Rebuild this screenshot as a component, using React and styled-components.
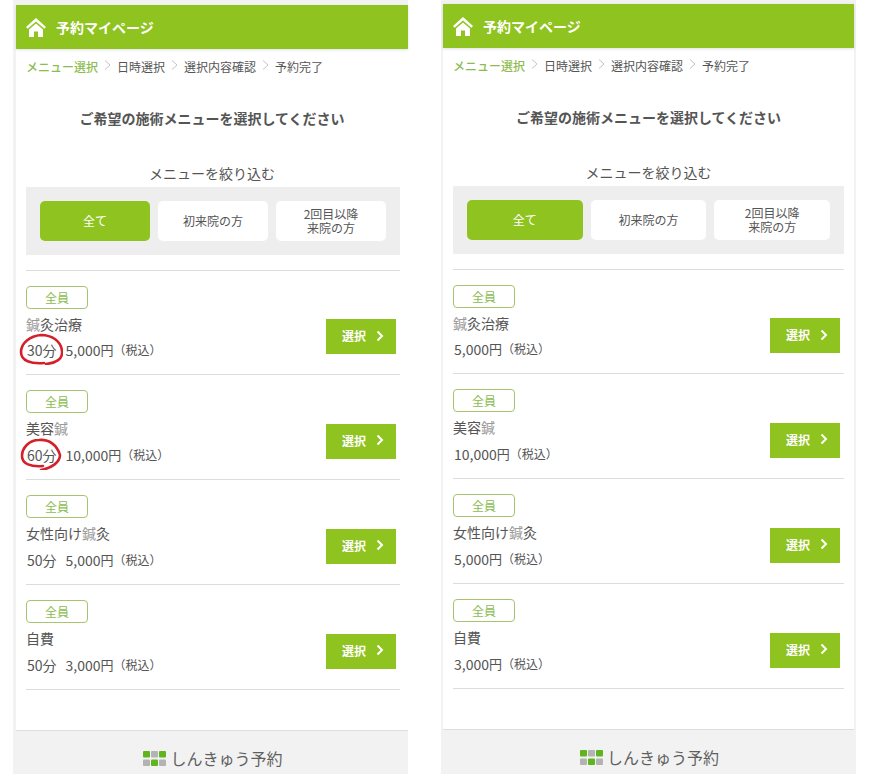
import React from 'react';
import styled, { createGlobalStyle } from 'styled-components';

const GlobalStyle = createGlobalStyle`
  html, body {
    background: #fff;
    margin: 0;
    padding: 0;
  }
  body {
    color: #555;
    font-family: "Noto Sans CJK JP", "Liberation Sans", sans-serif;
  }
`;

const colors = {
  green: '#8fc31f',
  softGreen: '#8cbc4f',
  line: '#dcdcdc',
  panel: '#eeeeee',
  strip: '#f2f2f2',
  text: '#555',
};

const Page = styled.div`
  display: flex;
  gap: 33px;
  height: 774px;
  overflow: hidden;
  padding-left: 13px;
`;
const Phone = styled.div`
  background: ${colors.strip};
  border-left: ${(p) => (p.$framed ? 2 : 3)}px solid ${colors.strip};
  border-right: ${(p) => (p.$framed ? `2px solid ${colors.strip}` : '0')};
  box-sizing: content-box;
  flex: none;
  height: 800px;
  padding-top: ${(p) => p.$top}px;
  width: ${(p) => p.$width}px;
`;
const Sheet = styled.div`
  background: #fff;
  display: flex;
  flex-direction: column;
`;
const Header = styled.header`
  align-items: center;
  background: ${colors.green};
  box-shadow: 0 1px 3px rgba(0, 0, 0, 0.12);
  color: #fff;
  display: flex;
  font-size: 14px;
  font-weight: 700;
  gap: 10px;
  height: 44px;
  padding-left: 10px;
`;
const Crumbs = styled.nav`
  align-items: center;
  display: flex;
  font-size: 12px;
  height: 36px;
  padding-left: 10px;
`;
const Crumb = styled.span`
  color: ${(p) => (p.$active ? colors.softGreen : colors.text)};
  font-weight: ${(p) => (p.$active ? 500 : 400)};
  line-height: 18px;
`;
const CrumbArrow = styled.svg`
  display: block;
  height: 10px;
  margin: -5px 0 0;
  width: 19px;
`;
const Title = styled.h1`
  color: ${colors.text};
  font-size: 14px;
  font-weight: 700;
  line-height: 20px;
  margin: 23px 0 0;
  text-align: center;
`;
const FilterLabel = styled.h2`
  color: ${colors.text};
  font-size: 14px;
  font-weight: 400;
  line-height: 20px;
  margin: 35px 0 4px;
  text-align: center;
`;
const Filter = styled.div`
  background: ${colors.panel};
  display: flex;
  gap: 8px;
  margin: 0 ${(p) => p.$gutter}px 0 10px;
  padding: 14px;
`;
const FilterButton = styled.button`
  align-items: center;
  background: ${(p) => (p.$active ? colors.green : '#fff')};
  border: 0;
  border-radius: 5px;
  color: ${(p) => (p.$active ? '#fff' : colors.text)};
  display: flex;
  flex: 1;
  font-family: inherit;
  font-size: 12px;
  height: 40px;
  justify-content: center;
  line-height: 14px;
  padding: 0;
  text-align: center;
`;
const List = styled.ul`
  border-top: 1px solid ${colors.line};
  list-style: none;
  margin: 15px ${(p) => p.$gutter}px 0 10px;
  padding: 0;
`;
const Badge = styled.span`
  align-items: center;
  border: 1px solid #a5c46d;
  border-radius: 4px;
  box-sizing: border-box;
  color: ${colors.softGreen};
  display: flex;
  font-size: 12px;
  height: 23px;
  justify-content: center;
  width: 62px;
`;
const RowMain = styled.div`
  align-items: center;
  display: flex;
  justify-content: space-between;
  margin-top: 3px;
  padding-right: 4px;
`;
const Info = styled.div`
  display: flex;
  flex-direction: column;
`;
const Name = styled.div`
  color: ${colors.text};
  font-size: 14px;
  line-height: 24px;
`;
const FadedGlyph = styled.span`
  color: #9a9a9a;
`;
const Fee = styled.div`
  color: ${colors.text};
  display: flex;
  font-size: 14px;
  line-height: 26px;
  margin-top: 2px;
  padding-left: 1px;
`;
const Row = styled.li`
  border-bottom: 1px solid ${colors.line};
  box-sizing: border-box;
  height: 105px;
  padding-top: 15px;
  &:first-child {
    height: 104px;
  }
  &:first-child ${Fee} {
    margin-top: 1px;
  }
`;
const Duration = styled.span`
  margin-right: 9px;
  position: relative;
`;
const Yen = styled.span`
  font-size: 13px;
`;
const Tax = styled.span`
  font-size: 12px;
`;
const RedRing = styled.svg`
  height: 32px;
  left: -8px;
  pointer-events: none;
  position: absolute;
  top: -4px;
  width: 44px;
`;
const SelectButton = styled.button`
  align-items: center;
  background: ${colors.green};
  border: 0;
  color: #fff;
  display: flex;
  font-family: inherit;
  font-size: 12px;
  font-weight: 700;
  gap: 10px;
  height: 35px;
  justify-content: center;
  margin-bottom: 2px;
  padding: 0 0 2px 4px;
  width: 70px;
`;
const Footer = styled.footer`
  align-items: center;
  background: ${colors.strip};
  border-top: 1px solid #dedede;
  color: #5f5f5f;
  display: flex;
  font-size: 16px;
  font-weight: 400;
  gap: 4px;
  height: 54px;
  justify-content: center;
  margin-top: 40px;
  padding-left: 2px;
`;

function HomeIcon() {
  return (
    <svg width="20" height="20" viewBox="0 0 20 20" fill="#fff">
      <path d="M10 1 L20 10 L18.4 11.8 L10 4.4 L1.6 11.8 L0 10 Z" />
      <path d="M10 6.6 L17 12.6 V20 H12 V14.5 H8 V20 H3 V12.6 Z" />
    </svg>
  );
}

function Arrow() {
  return (
    <CrumbArrow viewBox="0 0 19 10">
      <path d="M7 0.5 L12 5 L7 9.5" fill="none" stroke="#c4c4c4" strokeWidth="1" />
    </CrumbArrow>
  );
}

function ChevronIcon() {
  return (
    <svg width="8" height="12" viewBox="0 0 8 12">
      <path d="M1.5 1.5 L6 6 L1.5 10.5" fill="none" stroke="#fff" strokeWidth="2" />
    </svg>
  );
}

function Logo() {
  const cells = [
    [0, 0, '#5fb51d'], [8, 0, '#b3b3b3'], [16, 0, '#5fb51d'],
    [0, 8.5, '#b3b3b3'], [8, 8.5, '#5fb51d'], [16, 8.5, '#b3b3b3'],
  ];
  return (
    <svg width="23" height="15" viewBox="0 0 23 15">
      {cells.map(([x, y, fill]) => (
        <rect key={`${x}-${y}`} x={x} y={y} width="7" height="6.5" rx="1" fill={fill} />
      ))}
    </svg>
  );
}

const rings = {
  '30分': 'M27 31 C37 30 44 26 43 18 C42 8 33 2 22 2 C11 3 2 10 2 19 C2 28 12 31 25 30',
  '60分': 'M22 32 C33 30 41 24 41 17 C38 7 30 1 20 2 C10 2 3 10 3 18 C3 26 12 29 24 28',
};

const menus = [
  { id: 'a', name: [['f', '鍼'], ['', '灸治療']], minutes: '30分', price: '5,000', ring: true },
  { id: 'b', name: [['', '美容'], ['f', '鍼']], minutes: '60分', price: '10,000', ring: true },
  { id: 'c', name: [['', '女性向け'], ['f', '鍼'], ['', '灸']], minutes: '50分', price: '5,000' },
  { id: 'd', name: [['', '自費']], minutes: '50分', price: '3,000' },
];

function MenuRow({ menu, showMinutes }) {
  return (
    <Row>
      <Badge>全員</Badge>
      <RowMain>
        <Info>
          <Name>
            {menu.name.map(([kind, text]) =>
              kind ? <FadedGlyph key={text}>{text}</FadedGlyph> : <span key={text}>{text}</span>
            )}
          </Name>
          <Fee>
            {showMinutes && (
              <Duration>
                {menu.minutes}
                {menu.ring && (
                  <RedRing viewBox="0 0 44 32">
                    <path d={rings[menu.minutes]} fill="none" stroke="#d4202a" strokeWidth="2.6" strokeLinecap="round" />
                  </RedRing>
                )}
              </Duration>
            )}
            {menu.price}
            <Yen>円</Yen>
            <Tax>（税込）</Tax>
          </Fee>
        </Info>
        <SelectButton>
          選択
          <ChevronIcon />
        </SelectButton>
      </RowMain>
    </Row>
  );
}

function BookingPhone({ top, width, gutter, framed, showMinutes }) {
  return (
    <Phone $top={top} $width={width} $framed={framed}>
      <Sheet>
        <Header>
          <HomeIcon />
          予約マイページ
        </Header>
        <Crumbs>
          <Crumb $active>メニュー選択</Crumb>
          <Arrow />
          <Crumb>日時選択</Crumb>
          <Arrow />
          <Crumb>選択内容確認</Crumb>
          <Arrow />
          <Crumb>予約完了</Crumb>
        </Crumbs>
        <Title>ご希望の施術メニューを選択してください</Title>
        <FilterLabel>メニューを絞り込む</FilterLabel>
        <Filter $gutter={gutter}>
          <FilterButton $active>全て</FilterButton>
          <FilterButton>初来院の方</FilterButton>
          <FilterButton>
            2回目以降
            <br />
            来院の方
          </FilterButton>
        </Filter>
        <List $gutter={gutter}>
          {menus.map((menu) => (
            <MenuRow key={menu.id} menu={menu} showMinutes={showMinutes} />
          ))}
        </List>
        <Footer>
          <Logo />
          しんきゅう予約
        </Footer>
      </Sheet>
    </Phone>
  );
}

export default function App() {
  return (
    <>
      <GlobalStyle />
      <Page>
        <BookingPhone top={5} width={392} gutter={8} showMinutes />
        <BookingPhone top={4} width={411} gutter={10} framed />
      </Page>
    </>
  );
}
